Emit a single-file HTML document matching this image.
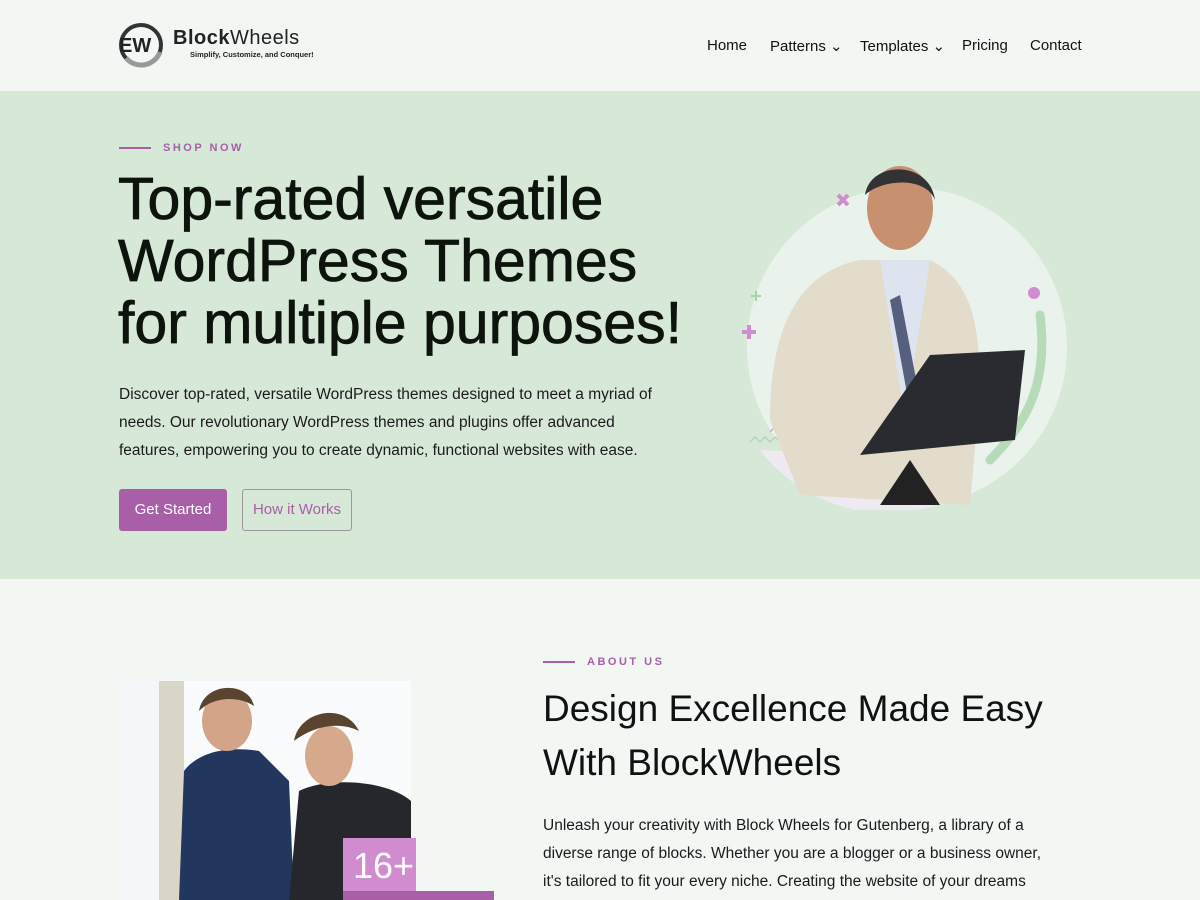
<!DOCTYPE html>
<html><head><meta charset="utf-8"><style>
*{margin:0;padding:0;box-sizing:border-box}
body{width:1200px;height:900px;overflow:hidden;background:#f2f7f4;font-family:"Liberation Sans",sans-serif;color:#111;position:relative}
.abs{position:absolute}
.nav a{position:absolute;top:37px;font-size:15px;color:#111;text-decoration:none}
.hero{position:absolute;top:91px;left:0;width:1200px;height:488px;background:#d6e9d7}
.tag{font-size:11px;letter-spacing:2.5px;color:#a95ea8;font-weight:bold}
.tagline{position:absolute;width:32px;height:2px;background:#a95ea8}
h1{position:absolute;left:118px;top:168px;font-size:59px;line-height:62px;font-weight:normal;color:#0c140c;letter-spacing:0;-webkit-text-stroke:0.8px #0c140c}
p.t{position:absolute;font-size:15.5px;line-height:28px;color:#1a1a1a}
</style></head><body>
<svg class="abs" style="left:118px;top:22px" width="46" height="46" viewBox="0 0 46 46"><circle cx="23" cy="23" r="20" fill="none" stroke="#333" stroke-width="4"/><path d="M8 36 A20 20 0 0 0 42 30" stroke="#999" stroke-width="5" fill="none"/><text x="1" y="30" font-size="20" font-weight="bold" font-family="Liberation Sans" fill="#222">EW</text></svg>
<div class="abs" style="left:173px;top:27px;font-size:20px;color:#222;letter-spacing:0.5px"><b>Block</b>Wheels</div>
<div class="abs" style="left:190px;top:50px;font-size:7.5px;font-weight:bold;color:#222">Simplify, Customize, and Conquer!</div>
<div class="nav"><a style="left:707px">Home</a><a style="left:770px">Patterns ⌄</a><a style="left:860px">Templates ⌄</a><a style="left:962px">Pricing</a><a style="left:1030px">Contact</a></div>
<div class="hero"></div>
<div class="tagline" style="left:119px;top:147px"></div>
<div class="abs tag" style="left:163px;top:142px">SHOP NOW</div>
<h1>Top-rated versatile<br>WordPress Themes<br>for multiple purposes!</h1>
<p class="t" style="left:119px;top:381px;width:560px">Discover top-rated, versatile WordPress themes designed to meet a myriad of needs. Our revolutionary WordPress themes and plugins offer advanced features, empowering you to create dynamic, functional websites with ease.</p>
<div class="abs" style="left:119px;top:489px;width:108px;height:42px;background:#a95ea8;border-radius:3px;color:#fff;font-size:15px;text-align:center;line-height:42px">Get Started</div>
<div class="abs" style="left:242px;top:489px;width:110px;height:42px;border:1px solid #999;border-radius:3px;color:#a95ea8;font-size:15px;text-align:center;line-height:40px">How it Works</div>
<svg class="abs" style="left:730px;top:160px" width="350" height="350" viewBox="0 0 350 350">
<circle cx="177" cy="187" r="160" fill="#eaf2ec"/>
<path d="M30 290 A160 160 0 0 0 240 330 L230 300 Z" fill="#efeaf2"/>
<path d="M310 155 C318 220 300 260 260 300" stroke="#b5dbb8" stroke-width="9" fill="none" stroke-linecap="round"/>
<circle cx="304" cy="133" r="6" fill="#d18ccf"/>
<path d="M108 35l10 10M118 35l-10 10" stroke="#d18ccf" stroke-width="4"/>
<path d="M12 172h14M19 165v14" stroke="#d18ccf" stroke-width="4"/>
<path d="M21 136h10M26 131v10" stroke="#a6d3a8" stroke-width="2"/>
<path d="M20 282l5-5 5 5 5-5 5 5 5-5 5 5 5-5 5 5 5-5 5 5" stroke="#a6d3a8" fill="none"/>
<path d="M40 272l5-5 5 5 5-5 5 5 5-5 5 5 5-5 5 5" stroke="#d18ccf" fill="none"/>
<path d="M40 260 C40 150 80 110 130 100 L200 100 C240 120 250 160 250 230 L240 345 L70 335 Z" fill="#e3dccb"/>
<path d="M150 100 L175 260 L200 100 Z" fill="#dde4ef"/>
<path d="M160 140 L170 135 L190 240 L180 250 Z" fill="#55607d"/>
<path d="M180 300 L210 345 L150 345 Z" fill="#222"/>
<ellipse cx="170" cy="48" rx="33" ry="42" fill="#c79170"/>
<path d="M135 35 C140 0 200 0 205 40 C195 15 150 20 135 35Z" fill="#333"/>
<path d="M200 195 L295 190 L285 280 L130 295 Z" fill="#2a2b30"/>
</svg>
<div class="tagline" style="left:543px;top:661px"></div>
<div class="abs tag" style="left:587px;top:656px">ABOUT US</div>
<div class="abs" style="left:543px;top:682px;font-size:37px;line-height:54px;color:#111">Design Excellence Made Easy<br>With BlockWheels</div>
<p class="t" style="left:543px;top:812px;width:520px">Unleash your creativity with Block Wheels for Gutenberg, a library of a diverse range of blocks. Whether you are a blogger or a business owner, it's tailored to fit your every niche. Creating the website of your dreams</p>
<div class="abs" style="left:119px;top:681px;width:292px;height:219px;background:#f4f6f7;overflow:hidden">
<div class="abs" style="left:40px;top:0;width:28px;height:219px;background:#d9d6c8"></div>
<div class="abs" style="left:65px;top:0;width:230px;height:219px;background:#fafbfc"></div>
<svg class="abs" style="left:0;top:0" width="292" height="219"><path d="M60 219 L65 90 C80 70 110 65 140 70 L170 100 L175 219Z" fill="#22375e"/><ellipse cx="108" cy="40" rx="25" ry="30" fill="#d2a488"/><path d="M80 30 C85 0 130 0 135 25 C120 15 95 15 80 30Z" fill="#5a4430"/><path d="M170 219 L180 110 C210 95 270 100 292 120 L292 219Z" fill="#26272c"/><ellipse cx="210" cy="75" rx="24" ry="30" fill="#d6a98d"/><path d="M175 60 C180 30 225 20 240 50 C220 40 195 45 175 60Z" fill="#5a4430"/></svg>
</div>
<div class="abs" style="left:343px;top:838px;width:73px;height:55px;background:#d18ccf;color:#fff;font-size:36px;line-height:55px;padding-left:10px">16+</div>
<div class="abs" style="left:343px;top:891px;width:151px;height:9px;background:#a95ea8"></div>
</body></html>
